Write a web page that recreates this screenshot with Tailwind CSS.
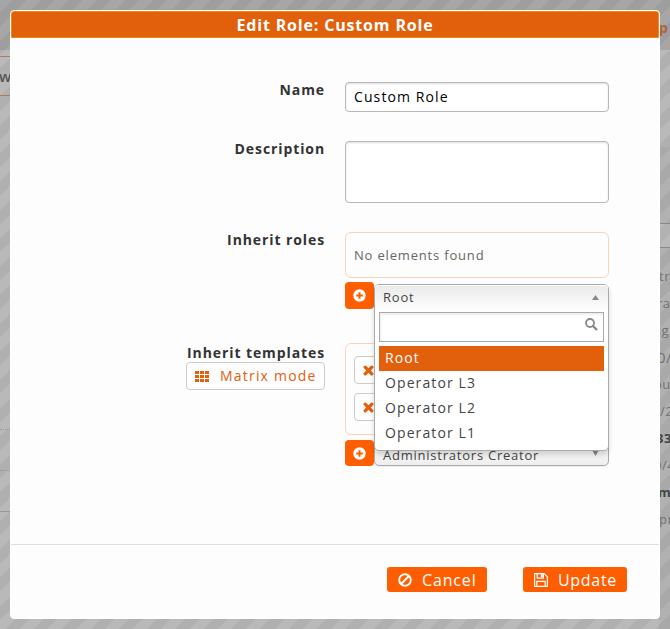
<!DOCTYPE html>
<html lang="en">
<head>
<meta charset="utf-8">
<title>Edit Role</title>
<script src="https://cdn.jsdelivr.net/npm/@tailwindcss/browser@4"></script>
</head>
<body class="w-[670px] h-[629px] overflow-hidden relative bg-[repeating-linear-gradient(-45deg,#b0b0b0_0_10px,#b9b9b9_10px_20px)] font-['Open_Sans',sans-serif] text-[14px] tracking-[1.1px] text-[#333]">
<!-- Page behind the dialog -->
<div class="flex flex-col h-full">
  <div class="h-[50px] shrink-0 bg-black/10 flex justify-end items-center"><span class="w-[11px] pt-1 font-bold text-[14px] text-[#b0643c]">p</span></div>
  <div class="flex flex-1 justify-between">
    <div class="w-[10px] flex flex-col">
      <div class="mt-[6px] h-10 border-y border-[#b07860] flex items-center"><span class="-ml-px text-[15px] font-semibold text-[#555]">w</span></div>
      <div class="h-[334px] border-b border-dotted border-[#999]"></div>
      <div class="h-[41px] border-b border-dotted border-[#999]"></div>
      <div class="h-[41px] border-b border-[#999]"></div>
    </div>
    <div class="w-[11px] flex flex-col text-[13px] text-[#707070]">
      <div class="h-[98px] shrink-0 border-b border-[#a9a9a9]"></div>
      <div class="flex-1 bg-black/4">
        <div class="h-[76px] border-b border-[#888]"></div>
        <div class="h-6 border-b border-[#888] bg-white/10"></div>
        <div class="pt-[15px] leading-[27px] whitespace-nowrap tracking-[0.5px]">
          <p>tr</p><p class="-ml-[2px]">ra</p><p class="-ml-[6px]">ng</p><p class="-ml-[2px] text-[15px]">0/</p><p class="-ml-[5px]">ou</p><p class="ml-px">/2</p><p class="-ml-[3px] font-bold text-[#444]">33</p><p class="-ml-[5px]">0/4</p><p class="-ml-px font-bold text-[#444]">m</p><p>pr</p>
        </div>
      </div>
    </div>
  </div>
</div>

<!-- Dialog -->
<section class="absolute left-[10px] top-[10px] w-[650px] h-[609px] bg-[#fdfdfd] border border-white rounded-[4px] flex flex-col">
  <h1 class="h-[27px] shrink-0 border border-[#ee8a0c] bg-[#e25f0c] rounded-t-[3px] text-white font-bold text-[16px] tracking-[0.83px] leading-[26px] text-center">Edit Role: Custom Role</h1>
  <div class="h-[506px] pt-[44px] flex flex-col">
    <div class="flex gap-5 h-[59px]">
      <label class="w-[314px] text-right font-bold leading-4 tracking-[0.9px]">Name</label>
      <div class="w-[264px] h-[30px] border border-[#b8b8b8] rounded-[4px] bg-white shadow-[inset_0_1px_2px_#0002] px-2 leading-[27px] text-black">Custom Role</div>
    </div>
    <div class="flex gap-5 h-[91px]">
      <label class="w-[314px] text-right font-bold leading-4 tracking-[0.9px]">Description</label>
      <div class="w-[264px] h-[62px] border border-[#b8b8b8] rounded-[4px] bg-white shadow-[inset_0_1px_2px_#0002]"></div>
    </div>
    <div class="flex gap-5 h-[111px]">
      <label class="w-[314px] text-right font-bold leading-4 tracking-[0.9px]">Inherit roles</label>
      <div class="w-[264px]">
        <div class="h-[46px] border border-[#fbd3bb] rounded-[6px] px-2 leading-[45px] text-[13px] tracking-[0.82px] text-[#666]">No elements found</div>
        <div class="flex pt-1">
          <div class="w-[29px] h-[27px] rounded-[4px] bg-[#ff5e00] flex items-center justify-center">
            <svg class="w-[13px] h-[13px] mr-px" viewBox="0 0 13 13"><circle cx="6.5" cy="6.5" r="6.2" fill="#fff"/><path d="M6.5 3.2v6.6M3.2 6.5h6.6" stroke="#ff5e00" stroke-width="2"/></svg>
          </div>
          <div class="relative w-[235px]">
            <!-- Open select with its option list -->
            <div class="absolute z-10 left-0 top-[2px] w-[235px] h-[167px] border border-[#aaa] rounded-[5px] bg-white shadow-[0_4px_5px_#00000026] flex flex-col">
              <div class="h-[27px] shrink-0 rounded-t-[4px] bg-linear-to-b from-[#eaeaea] to-white shadow-[inset_0_1px_0_#fff] flex items-center justify-between pl-2 pr-[8px] text-[13px] tracking-[0.8px] text-[#444]"><span class="pb-[2px]">Root</span>
                <svg class="w-[7px] h-[5px] mb-[3px] mr-px" viewBox="0 0 8 6" preserveAspectRatio="none"><path d="M4 0l4 6H0z" fill="#888"/></svg></div>
              <div class="mx-1 h-[30px] shrink-0 border border-[#aaa] bg-white shadow-[inset_1px_2px_2px_#0001] flex justify-end pt-[5px] pr-[5px]">
                <svg class="w-[13px] h-[13px]" viewBox="0 0 13 13" fill="none" stroke="#888"><circle cx="5" cy="5" r="4" stroke-width="1.8"/><path d="M8 8l4 4" stroke-width="2.4"/></svg>
              </div>
              <ul class="mx-1 mt-1 leading-[23px] text-[#444]">
                <li class="h-[25px] bg-[#e25f0c] text-white pl-[6px]">Root</li><li class="h-[25px] pl-[6px]">Operator L3</li><li class="h-[25px] pl-[6px]">Operator L2</li><li class="h-[25px] pl-[6px]">Operator L1</li>
              </ul>
            </div>
          </div>
        </div>
      </div>
    </div>
    <div class="flex gap-5">
      <div class="w-[314px] flex flex-col items-end">
        <label class="font-bold leading-[19px] tracking-[0.9px]">Inherit templates</label>
        <div class="w-[139px] h-[28px] border border-[#ccc] rounded-[4px] flex items-center text-[#e25f0c] pl-2">
          <svg class="w-[14px] h-[11px] mr-[11px]" viewBox="0 0 14 11" fill="#e25f0c"><path d="M0 0h4v3H0zM5 0h4v3H5zM10 0h4v3h-4zM0 4h4v3H0zM5 4h4v3H5zM10 4h4v3h-4zM0 8h4v3H0zM5 8h4v3H5zM10 8h4v3h-4z"/></svg>
          <span class="pb-[2px] tracking-[1.2px]">Matrix mode</span>
        </div>
      </div>
      <div class="w-[264px]">
        <div class="h-[92px] border border-[#fbd3bb] rounded-[6px] px-2 pt-3 flex flex-col gap-[9px]">
          <div class="h-[28px] border border-[#ccc] rounded-[4px] flex items-center pl-[8px]"><svg class="w-[11px] h-[11px]" viewBox="0 0 10 10"><path d="M2 2l6 6M8 2l-6 6" stroke="#e25f0c" stroke-width="3" stroke-linecap="round"/></svg></div>
          <div class="h-[28px] border border-[#ccc] rounded-[4px] flex items-center pl-[8px]"><svg class="w-[11px] h-[11px]" viewBox="0 0 10 10"><path d="M2 2l6 6M8 2l-6 6" stroke="#e25f0c" stroke-width="3" stroke-linecap="round"/></svg></div>
        </div>
        <div class="flex pt-[5px]">
          <div class="w-[29px] h-[26px] rounded-[4px] bg-[#ff5e00] flex items-center justify-center">
            <svg class="w-[13px] h-[13px] mr-px" viewBox="0 0 13 13"><circle cx="6.5" cy="6.5" r="6.2" fill="#fff"/><path d="M6.5 3.2v6.6M3.2 6.5h6.6" stroke="#ff5e00" stroke-width="2"/></svg>
          </div>
          <div class="w-[235px] h-[26px] border border-[#aaa] rounded-[5px] bg-linear-to-b from-white to-[#eee] shadow-[0_1px_1px_#0001] flex items-center justify-between pl-2 pr-[8px] text-[13px] tracking-[0.77px] text-[#444]"><span class="pt-[5px]">Administrators Creator</span>
            <svg class="w-[7px] h-[6px] mr-px" viewBox="0 0 8 6" preserveAspectRatio="none"><path d="M4 6l4-6H0z" fill="#888"/></svg></div>
        </div>
      </div>
    </div>
  </div>
  <footer class="flex-1 border-t border-[#ddd] flex justify-end gap-9 pt-[22px] pr-8 text-[16px] tracking-[0.85px] text-white">
    <button class="w-[100px] h-[25px] rounded-[3px] bg-[#ff5e00] flex items-center pl-[11px]">
      <svg class="w-[14px] h-[14px] mr-[10px]" viewBox="0 0 14 14" fill="none" stroke="#fff" stroke-width="2"><circle cx="7" cy="7" r="5.8"/><path d="M3 11l8-8"/></svg><span class="pt-px leading-[25px]">Cancel</span></button>
    <button class="w-[104px] h-[25px] rounded-[3px] bg-[#ff5e00] flex items-center pl-[11px]">
      <svg class="w-[14px] h-[14px] mt-px mr-[10px]" viewBox="0 0 14 14" fill="none" stroke="#fff" stroke-width="1.2"><path d="M.6.6h9.6l3.2 3.2v9.6H.6z"/><path d="M2.8 13V8.4h8.4V13M3.2.8v4.4h6.2V.8"/><path d="M6.8 1h2v3h-2z" fill="#fff" stroke="none"/></svg><span class="pt-px leading-[25px] tracking-[0.7px]">Update</span></button>
  </footer>
</section>
</body>
</html>
